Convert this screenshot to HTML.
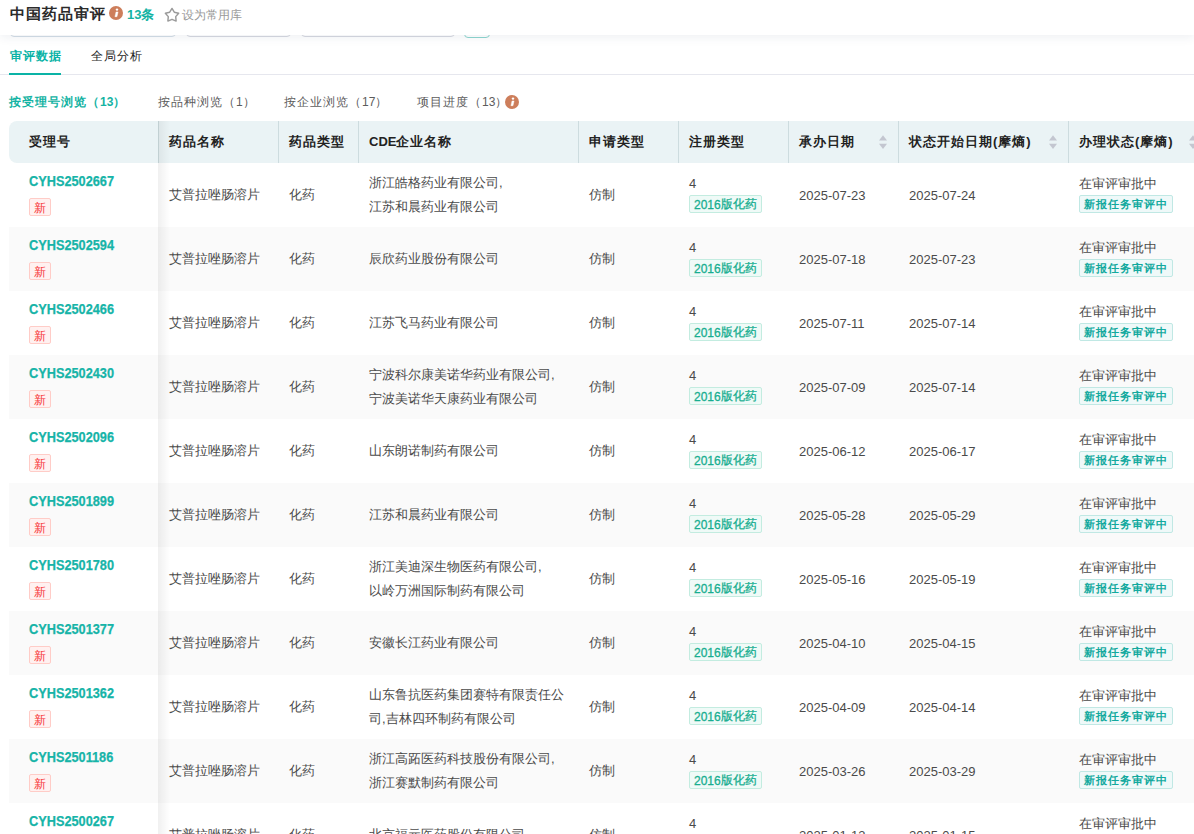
<!DOCTYPE html>
<html><head><meta charset="utf-8">
<style>
*{box-sizing:border-box;margin:0;padding:0}
html,body{width:1194px;height:834px;overflow:hidden;background:#fff}
body{position:relative;font-family:"Liberation Sans",sans-serif;color:#333}
.abs{position:absolute}
#hdr{position:absolute;left:0;top:0;width:1194px;height:35px;background:#fff;z-index:10;box-shadow:0 2px 10px rgba(30,50,90,0.08)}
.inp{position:absolute;top:0;height:37px;border:1px solid #d3dde6;border-radius:4px;background:#fff;z-index:1}
.title{position:absolute;left:10px;top:4px;font-size:15px;letter-spacing:1px;font-weight:bold;color:#2b2b2b;line-height:20px;white-space:nowrap}
.info{position:absolute;width:14px;height:14px;border-radius:50%;background:#c9825b;color:#fff;font-size:11px;font-weight:bold;font-style:italic;text-align:center;line-height:14px;font-family:"Liberation Serif",serif}
.cnt{position:absolute;left:127px;top:6px;font-size:13px;font-weight:bold;color:#14b3a3;line-height:18px;white-space:nowrap}
.fav{position:absolute;left:182px;top:6px;font-size:12px;color:#999;line-height:18px;white-space:nowrap}
.tabs{position:absolute;left:0;top:36px;width:1194px;height:39px;border-bottom:1px solid #e6e7ee}
.tab{position:absolute;top:11px;font-size:12px;letter-spacing:1px;line-height:18px;white-space:nowrap}
.tab.on{color:#0ab3a6;font-weight:bold}
.ul{position:absolute;left:9px;top:37px;width:52px;height:2px;background:#0ab3a6}
.sub{position:absolute;top:93px;font-size:12px;letter-spacing:1px;line-height:18px;color:#5c5c5c;white-space:nowrap}
.sub.on{color:#14b3a3;font-weight:bold}
table{position:absolute;left:9px;top:121px;border-collapse:separate;border-spacing:0;table-layout:fixed;width:1199px}
th{height:42px;background:#eaf3f5;font-size:13px;letter-spacing:1px;font-weight:bold;color:#222;text-align:left;padding:0 10px;border-left:1px solid #cddcdf;position:relative;white-space:nowrap}
th:first-child{border-left:none;border-radius:8px 0 0 8px;padding-left:20px}
td{height:64px;font-size:13px;color:#4a4a4a;padding:2px 10px 0;border-left:1px solid transparent;vertical-align:middle;line-height:24px}
td:first-child{border-left:none;padding-left:20px}
td.c{padding-top:0}
tr:nth-child(odd) td{background:#fafafa}
.id{color:#17b4a8;font-weight:bold;font-size:14px;-webkit-text-stroke:.25px #17b4a8;line-height:18px;margin-top:-1px;transform:scaleX(.91);transform-origin:0 0}
.new{display:inline-block;margin-top:8px;height:18px;line-height:16px;padding:1px 4px 0;font-size:12px;color:#f7363a;background:#fff1f0;border:1px solid #ffccc7;border-radius:2px}
.tg{display:inline-block;height:18px;line-height:16px;padding:0 4px;font-size:12px;-webkit-text-stroke:.3px #18ae90;color:#18ae90;background:#effaf7;border:1px solid #c3ece0;border-radius:2px}
.tgb{font-weight:bold;font-size:11px;letter-spacing:1px;-webkit-text-stroke:0;color:#13a99e;background:#eff9f9;border-color:#c0e8e4}
.sl{line-height:16px}
.dg{position:relative;top:1px}
.sort{position:absolute;right:11px;top:14px;width:8px;height:14px}
.shadow{position:absolute;left:158px;top:121px;width:12px;height:713px;background:linear-gradient(to right,rgba(0,0,0,0.06),rgba(0,0,0,0));z-index:5}
</style></head><body>
<div class="inp" style="left:10px;width:166px"></div>
<div class="inp" style="left:186px;width:105px;border-color:#d6d8e0"></div>
<div class="inp" style="left:301px;width:154px;border-color:#d6d8e0"></div>
<div class="inp" style="left:464px;width:26px;border-color:#8fd6cf;top:1px"></div>
<div id="hdr">
  <div class="title">中国药品审评</div>
  <svg class="abs" style="left:109px;top:6px" width="14" height="14" viewBox="0 0 14 14"><circle cx="7" cy="7" r="7" fill="#cd7e5b"/><circle cx="8" cy="3.6" r="1.2" fill="#fff"/><path d="M7 5.9H9.1L8 10.7H5.9Z" fill="#fff" stroke="#fff" stroke-width=".4" stroke-linejoin="round"/></svg>
  <div class="cnt">13条</div>
  <svg class="abs" style="left:164px;top:7px" width="16" height="16" viewBox="0 0 16 16"><path d="M8.00 1.40 L10.29 5.24 L14.66 6.24 L11.71 9.61 L12.11 14.06 L8.00 12.30 L3.89 14.06 L4.29 9.61 L1.34 6.24 L5.71 5.24Z" fill="none" stroke="#9b9b9b" stroke-width="1.45" stroke-linejoin="round"/></svg>
  <div class="fav">设为常用库</div>
</div>
<div class="tabs">
  <div class="tab on" style="left:10px">审评数据</div>
  <div class="tab" style="left:91px;color:#1c1c1c;font-weight:500">全局分析</div>
  <div class="ul"></div>
</div>
<div class="sub on" style="left:9px">按受理号浏览（<span style="letter-spacing:0">13</span>）</div>
<div class="sub" style="left:158px">按品种浏览（<span style="letter-spacing:0">1</span>）</div>
<div class="sub" style="left:284px">按企业浏览（<span style="letter-spacing:0">17</span>）</div>
<div class="sub" style="left:417px">项目进度（<span style="letter-spacing:0">13</span>）</div>
<svg class="abs" style="left:505px;top:95px" width="14" height="14" viewBox="0 0 14 14"><circle cx="7" cy="7" r="7" fill="#cd7e5b"/><circle cx="8" cy="3.6" r="1.2" fill="#fff"/><path d="M7 5.9H9.1L8 10.7H5.9Z" fill="#fff" stroke="#fff" stroke-width=".4" stroke-linejoin="round"/></svg>
<!--TABLE-->
<table><colgroup><col style="width:149px"><col style="width:120px"><col style="width:80px"><col style="width:220px"><col style="width:100px"><col style="width:110px"><col style="width:110px"><col style="width:170px"><col style="width:140px"></colgroup>
<tr><th>受理号</th><th>药品名称</th><th>药品类型</th><th><span style="letter-spacing:0">CDE</span>企业名称</th><th>申请类型</th><th>注册类型</th><th>承办日期<svg class="sort" viewBox="0 0 8 14"><path d="M4 0.2L8 5.4H0Z" fill="#c3c6d0"/><path d="M4 14L8 8.8H0Z" fill="#c3c6d0"/></svg></th><th>状态开始日期(摩熵)<svg class="sort" viewBox="0 0 8 14"><path d="M4 0.2L8 5.4H0Z" fill="#c3c6d0"/><path d="M4 14L8 8.8H0Z" fill="#c3c6d0"/></svg></th><th>办理状态(摩熵)<svg class="sort" viewBox="0 0 8 14"><path d="M4 0.2L8 5.4H0Z" fill="#c3c6d0"/><path d="M4 14L8 8.8H0Z" fill="#c3c6d0"/></svg></th></tr>
<tr><td><div class="id">CYHS2502667</div><span class="new">新</span></td><td class="c">艾普拉唑肠溶片</td><td class="c">化药</td><td class="c">浙江皓格药业有限公司,<br>江苏和晨药业有限公司</td><td class="c">仿制</td><td><div class="sl">4</div><span class="tg"><span class="dg">2016</span>版化药</span></td><td>2025-07-23</td><td>2025-07-24</td><td><div class="sl">在审评审批中</div><span class="tg tgb">新报任务审评中</span></td></tr>
<tr><td><div class="id">CYHS2502594</div><span class="new">新</span></td><td class="c">艾普拉唑肠溶片</td><td class="c">化药</td><td class="c">辰欣药业股份有限公司</td><td class="c">仿制</td><td><div class="sl">4</div><span class="tg"><span class="dg">2016</span>版化药</span></td><td>2025-07-18</td><td>2025-07-23</td><td><div class="sl">在审评审批中</div><span class="tg tgb">新报任务审评中</span></td></tr>
<tr><td><div class="id">CYHS2502466</div><span class="new">新</span></td><td class="c">艾普拉唑肠溶片</td><td class="c">化药</td><td class="c">江苏飞马药业有限公司</td><td class="c">仿制</td><td><div class="sl">4</div><span class="tg"><span class="dg">2016</span>版化药</span></td><td>2025-07-11</td><td>2025-07-14</td><td><div class="sl">在审评审批中</div><span class="tg tgb">新报任务审评中</span></td></tr>
<tr><td><div class="id">CYHS2502430</div><span class="new">新</span></td><td class="c">艾普拉唑肠溶片</td><td class="c">化药</td><td class="c">宁波科尔康美诺华药业有限公司,<br>宁波美诺华天康药业有限公司</td><td class="c">仿制</td><td><div class="sl">4</div><span class="tg"><span class="dg">2016</span>版化药</span></td><td>2025-07-09</td><td>2025-07-14</td><td><div class="sl">在审评审批中</div><span class="tg tgb">新报任务审评中</span></td></tr>
<tr><td><div class="id">CYHS2502096</div><span class="new">新</span></td><td class="c">艾普拉唑肠溶片</td><td class="c">化药</td><td class="c">山东朗诺制药有限公司</td><td class="c">仿制</td><td><div class="sl">4</div><span class="tg"><span class="dg">2016</span>版化药</span></td><td>2025-06-12</td><td>2025-06-17</td><td><div class="sl">在审评审批中</div><span class="tg tgb">新报任务审评中</span></td></tr>
<tr><td><div class="id">CYHS2501899</div><span class="new">新</span></td><td class="c">艾普拉唑肠溶片</td><td class="c">化药</td><td class="c">江苏和晨药业有限公司</td><td class="c">仿制</td><td><div class="sl">4</div><span class="tg"><span class="dg">2016</span>版化药</span></td><td>2025-05-28</td><td>2025-05-29</td><td><div class="sl">在审评审批中</div><span class="tg tgb">新报任务审评中</span></td></tr>
<tr><td><div class="id">CYHS2501780</div><span class="new">新</span></td><td class="c">艾普拉唑肠溶片</td><td class="c">化药</td><td class="c">浙江美迪深生物医药有限公司,<br>以岭万洲国际制药有限公司</td><td class="c">仿制</td><td><div class="sl">4</div><span class="tg"><span class="dg">2016</span>版化药</span></td><td>2025-05-16</td><td>2025-05-19</td><td><div class="sl">在审评审批中</div><span class="tg tgb">新报任务审评中</span></td></tr>
<tr><td><div class="id">CYHS2501377</div><span class="new">新</span></td><td class="c">艾普拉唑肠溶片</td><td class="c">化药</td><td class="c">安徽长江药业有限公司</td><td class="c">仿制</td><td><div class="sl">4</div><span class="tg"><span class="dg">2016</span>版化药</span></td><td>2025-04-10</td><td>2025-04-15</td><td><div class="sl">在审评审批中</div><span class="tg tgb">新报任务审评中</span></td></tr>
<tr><td><div class="id">CYHS2501362</div><span class="new">新</span></td><td class="c">艾普拉唑肠溶片</td><td class="c">化药</td><td class="c">山东鲁抗医药集团赛特有限责任公<br>司,吉林四环制药有限公司</td><td class="c">仿制</td><td><div class="sl">4</div><span class="tg"><span class="dg">2016</span>版化药</span></td><td>2025-04-09</td><td>2025-04-14</td><td><div class="sl">在审评审批中</div><span class="tg tgb">新报任务审评中</span></td></tr>
<tr><td><div class="id">CYHS2501186</div><span class="new">新</span></td><td class="c">艾普拉唑肠溶片</td><td class="c">化药</td><td class="c">浙江高跖医药科技股份有限公司,<br>浙江赛默制药有限公司</td><td class="c">仿制</td><td><div class="sl">4</div><span class="tg"><span class="dg">2016</span>版化药</span></td><td>2025-03-26</td><td>2025-03-29</td><td><div class="sl">在审评审批中</div><span class="tg tgb">新报任务审评中</span></td></tr>
<tr><td><div class="id">CYHS2500267</div><span class="new">新</span></td><td class="c">艾普拉唑肠溶片</td><td class="c">化药</td><td class="c">北京福元医药股份有限公司</td><td class="c">仿制</td><td><div class="sl">4</div><span class="tg"><span class="dg">2016</span>版化药</span></td><td>2025-01-13</td><td>2025-01-15</td><td><div class="sl">在审评审批中</div><span class="tg tgb">新报任务审评中</span></td></tr>
</table><div class="shadow"></div>
</body></html>
